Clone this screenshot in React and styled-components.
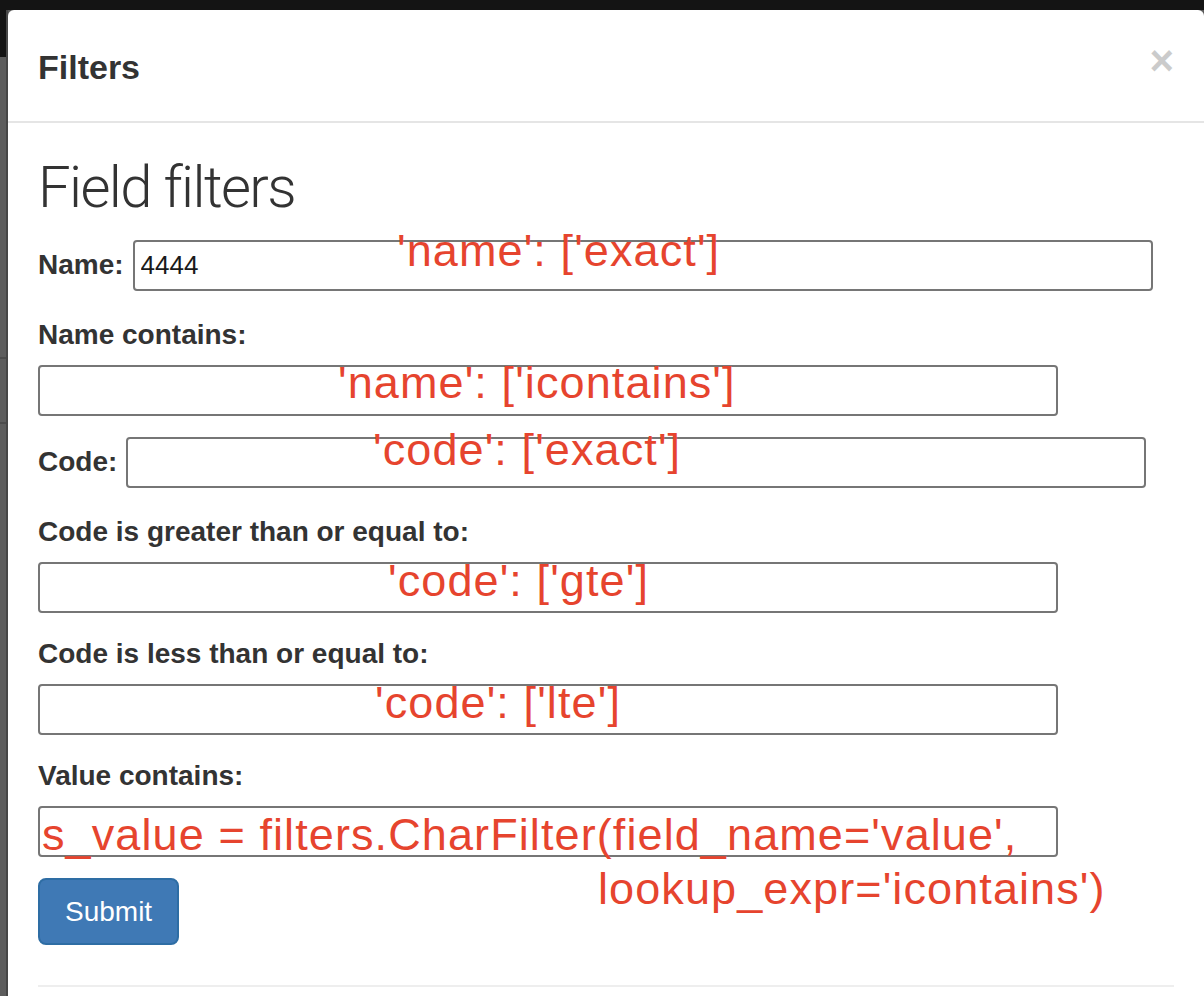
import React from 'react';
import styled, { createGlobalStyle } from 'styled-components';

const GlobalStyle = createGlobalStyle`
    html, body {
        margin: 0;
        padding: 0;
        background: #5c5c5c;
        overflow: hidden;
    }
    body {
        font-family: "Liberation Sans", Arial, sans-serif;
        color: #333;
    }
`;

const Styled = {
    Page: styled.div`
        position: relative;
        display: grid;
        grid-template-columns: 8px 1fr;
        grid-template-rows: 10px 1fr;
        height: 996px;
        overflow: hidden;
    `,
    TopBand: styled.div`
        grid-column: 1 / -1;
        background: #141414;
    `,
    Backdrop: styled.div`
        display: flex;
        flex-direction: column;
        background: #5d5d5d;
        border-right: 2px solid #474747;

        & .nav {
            height: 47px;
            background: #141414;
        }
    `,
    BackdropRule: styled.div`
        height: 2px;
        background: #4c4c4c;
        margin-top: ${({ gap }) => gap}px;
    `,
    Modal: styled.div`
        background: #fff;
        border-radius: 6px 6px 0 0;
        display: flex;
        flex-direction: column;
    `,
    Header: styled.div`
        display: flex;
        justify-content: space-between;
        align-items: flex-start;
        padding: 32px 30px 28px;
        border-bottom: 2px solid #e5e5e5;
    `,
    Title: styled.h4`
        margin: 0;
        font: 700 34px/51px "Liberation Sans", Arial, sans-serif;
        color: #333;
    `,
    Close: styled.button`
        margin-top: -2px;
        padding: 0;
        border: 0;
        background: none;
        font: 700 42px/1 "Liberation Sans", Arial, sans-serif;
        color: #000;
        opacity: 0.2;
        cursor: pointer;
    `,
    Body: styled.div`
        padding: 30px;
    `,
    Heading: styled.h1`
        margin: 3px 0 20px;
        font: 300 58px/1.1 Roboto, "Liberation Sans", sans-serif;
        letter-spacing: -1.6px;
        color: #333;
    `,
    Field: styled.div`
        display: flex;
        flex-direction: ${({ inline }) => (inline ? 'row' : 'column')};
        align-items: ${({ inline }) => (inline ? 'center' : 'flex-start')};
        gap: ${({ inline }) => (inline ? '9px' : '10px')};
        margin-bottom: ${({ inline }) => (inline ? '24px' : '21px')};
    `,
    Label: styled.label`
        font: 700 28px/40px "Liberation Sans", Arial, sans-serif;
        color: #333;
    `,
    Input: styled.input`
        box-sizing: border-box;
        width: 1020px;
        height: 51px;
        padding: 0 6px;
        border: 2px solid #767676;
        border-radius: 4px;
        font: 400 26px "Liberation Sans", Arial, sans-serif;
        color: #1a1a1a;
        background: #fff;
        outline: none;
    `,
    Submit: styled.button`
        box-sizing: border-box;
        height: 67px;
        padding: 12px 25px;
        border: 2px solid #2e6da4;
        border-radius: 8px;
        background: #3f79b5;
        color: #fff;
        font: 400 28px/40px "Liberation Sans", Arial, sans-serif;
        cursor: pointer;
    `,
    Rule: styled.hr`
        margin: 40px 0 0;
        border: 0;
        border-top: 2px solid #eee;
    `,
    Note: styled.span`
        position: absolute;
        left: ${({ x }) => x}px;
        top: ${({ y }) => y}px;
        font: 400 45px/45px "Liberation Sans", Arial, sans-serif;
        letter-spacing: 1.1px;
        color: #e6442e;
        white-space: nowrap;
        pointer-events: none;
    `,
};

const fields = [
    { label: 'Name:', inline: true, value: '4444' },
    { label: 'Name contains:' },
    { label: 'Code:', inline: true },
    { label: 'Code is greater than or equal to:' },
    { label: 'Code is less than or equal to:' },
    { label: 'Value contains:' },
];

const notes = [
    { x: 397, y: 228, text: "'name': ['exact']" },
    { x: 338, y: 360, text: "'name': ['icontains']" },
    { x: 373, y: 427, text: "'code': ['exact']" },
    { x: 388, y: 558, text: "'code': ['gte']" },
    { x: 375, y: 680, text: "'code': ['lte']" },
    { x: 42, y: 812, text: "s_value = filters.CharFilter(field_name='value'," },
    { x: 598, y: 866, text: "lookup_expr='icontains')" },
];

function App() {
    return (
        <>
            <GlobalStyle />
            <Styled.Page>
                <Styled.TopBand />
                <Styled.Backdrop>
                    <div className="nav" />
                    <Styled.BackdropRule gap={300} />
                    <Styled.BackdropRule gap={63} />
                </Styled.Backdrop>
                <Styled.Modal>
                    <Styled.Header>
                        <Styled.Title>Filters</Styled.Title>
                        <Styled.Close aria-label="Close">×</Styled.Close>
                    </Styled.Header>
                    <Styled.Body>
                        <Styled.Heading>Field filters</Styled.Heading>
                        <form onSubmit={(e) => e.preventDefault()}>
                            {fields.map((f) => (
                                <Styled.Field key={f.label} inline={f.inline}>
                                    <Styled.Label>{f.label}</Styled.Label>
                                    <Styled.Input type="text" defaultValue={f.value || ''} />
                                </Styled.Field>
                            ))}
                            <Styled.Submit type="submit">Submit</Styled.Submit>
                        </form>
                        <Styled.Rule />
                    </Styled.Body>
                </Styled.Modal>
                {notes.map((n) => (
                    <Styled.Note key={n.text} x={n.x} y={n.y}>
                        {n.text}
                    </Styled.Note>
                ))}
            </Styled.Page>
        </>
    );
}

export default App;
